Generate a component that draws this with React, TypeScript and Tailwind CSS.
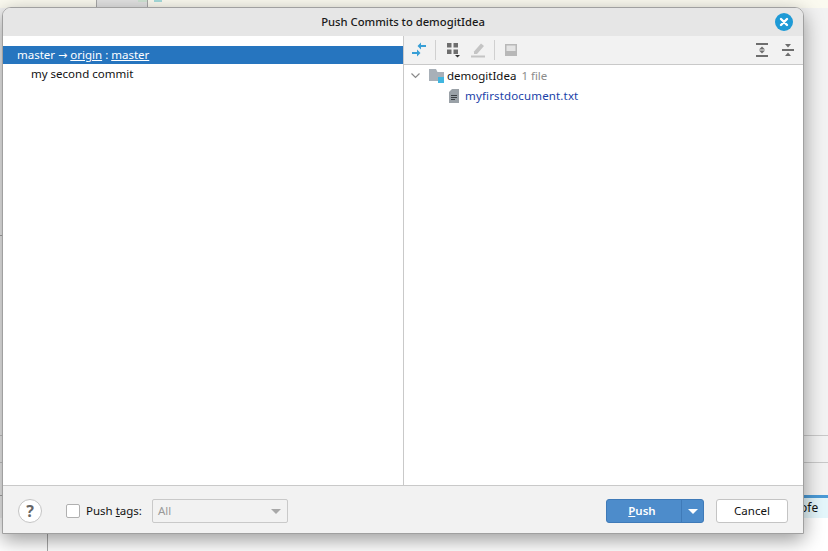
const FONT = "font-['Noto_Sans',sans-serif]";

function DiffIcon() {
  return (
    <svg width="16" height="16" viewBox="0 0 16 16" className="block">
      <path d="M15 3H10V0.5L6.5 4L10 7.5V5H15Z" fill="#389fd6" />
      <path d="M1 10H6V7.5L9.5 11L6 14.5V12H1Z" fill="#389fd6" />
    </svg>
  );
}

function GroupIcon() {
  return (
    <svg width="16" height="18" viewBox="0 0 16 18" className="block">
      <rect x="0" y="2" width="4.5" height="4.5" fill="#6e6e6e" />
      <rect x="6.5" y="2" width="4.5" height="4.5" fill="#6e6e6e" />
      <rect x="0" y="8.5" width="4.5" height="4.5" fill="#6e6e6e" />
      <rect x="6.5" y="8.5" width="4.5" height="4.5" fill="#6e6e6e" />
      <path d="M8 14H13L10.5 16.5Z" fill="#333" />
    </svg>
  );
}

function EditIcon() {
  return (
    <svg width="15" height="16" viewBox="0 0 15 16" className="block">
      <path d="M3 9.5L10 1.5L13 4L6 12H3Z" fill="#c4c4c4" />
      <rect x="0" y="13.5" width="14" height="2" fill="#c4c4c4" />
    </svg>
  );
}

function PreviewIcon() {
  return (
    <svg width="12" height="12" viewBox="0 0 12 12" className="block">
      <rect width="12" height="12" fill="#b8b8b8" />
      <rect x="1.5" y="1.5" width="9" height="5.5" fill="#e4e4e4" />
    </svg>
  );
}

function ExpandIcon() {
  return (
    <svg width="12" height="14" viewBox="0 0 12 14" className="block">
      <rect width="12" height="2" fill="#6e6e6e" />
      <rect y="12" width="12" height="2" fill="#6e6e6e" />
      <path d="M3 6.5L6 3.5L9 6.5Z" fill="#6e6e6e" />
      <path d="M3 7.5L9 7.5L6 10.5Z" fill="#6e6e6e" />
    </svg>
  );
}

function CollapseIcon() {
  return (
    <svg width="12" height="12" viewBox="0 0 12 12" className="block">
      <rect y="5" width="12" height="2" fill="#6e6e6e" />
      <path d="M3 0H9L6 3.5Z" fill="#6e6e6e" />
      <path d="M3 12H9L6 8.5Z" fill="#6e6e6e" />
    </svg>
  );
}

function FolderIcon() {
  return (
    <svg width="16" height="14" viewBox="0 0 16 14" className="block">
      <path d="M0 0H7L8.5 3H15V12H0Z" fill="#a8b0b8" />
      <rect x="9" y="8" width="6" height="6" fill="#40b6e0" />
    </svg>
  );
}

function FileIcon() {
  return (
    <svg width="10" height="14" viewBox="0 0 10 14" className="block">
      <path d="M3 0H10V14H0V3Z" fill="#9aa1a7" />
      <rect x="2" y="6" width="6" height="1" fill="#3c4044" />
      <rect x="2" y="8" width="6" height="1" fill="#3c4044" />
      <rect x="2" y="10" width="4" height="1" fill="#3c4044" />
    </svg>
  );
}

function CloseIcon() {
  return (
    <svg width="18" height="18" viewBox="0 0 18 18" className="block">
      <circle cx="9" cy="9" r="9" fill="#1e9ad6" />
      <path d="M6 6L12 12M12 6L6 12" stroke="#fff" strokeWidth="2.4" strokeLinecap="round" />
    </svg>
  );
}

// the IDE window behind the dialog, only slivers of it show
function Backdrop() {
  return (
    <div className="absolute inset-0 bg-[#f2f2f2]">
      <div className="absolute inset-x-0 top-0 h-[8px] bg-[#fbfaf0]" />
      <div className="absolute left-[96px] top-0 h-[8px] w-[52px] border-x border-[#a8a8a8] bg-[#e2e2e2]" />
      <div className="absolute left-[138px] top-0 h-[2px] w-[9px] bg-[#cfe3d3]" />
      <div className="absolute left-[154px] top-0 h-[2px] w-[8px] bg-[#a6dcdc]" />
      <div className="absolute inset-x-0 top-[518px] h-[33px] bg-white" />
      <div className="absolute left-[47px] top-[533px] h-[18px] w-px bg-[#a8a8a8]" />
      <div className="absolute left-0 top-[235px] h-px w-[3px] bg-[#a8a8a8]" />
      <div className="absolute inset-x-0 top-[435px] h-px bg-[#c8c8c8]" />
      <div className="absolute inset-x-0 top-[462px] h-px bg-[#c8c8c8]" />
      <div className="absolute left-0 top-[495px] h-px w-[3px] bg-[#a8a8a8]" />
      <div className="absolute left-[803px] right-0 top-[495px] h-[3px] bg-[#4a9ad6]" />
      <div className="absolute left-[803px] right-0 top-[498px] h-[20px] bg-[#e4f6fb]" />
      <div className="absolute left-[800px] top-[499px] text-[12px] leading-[18px] text-[#111]">ofe</div>
    </div>
  );
}

export default function App() {
  return (
    <div className={`relative h-[551px] w-[828px] overflow-hidden ${FONT} text-[11.5px] text-[#1a1a1a]`}>
      <Backdrop />
      <div className="absolute left-[2px] top-[7px] flex h-[527px] w-[802px] flex-col overflow-hidden rounded-t-[9px] border border-[#a0a0a0] bg-white shadow-[0_6px_20px_rgba(0,0,0,0.4)]">
        <div className="relative flex h-[28px] shrink-0 items-center justify-center bg-[#e6e6e6] text-[11.25px] font-medium">
          <span>Push Commits to demogitIdea</span>
          <div className="absolute right-[10px] top-[5px]">
            <CloseIcon />
          </div>
        </div>

        <div className="flex min-h-0 flex-1">
          <div className="w-[401px] shrink-0 border-r border-[#c9c9c9] pt-[10px]">
            <div className="flex h-[18px] items-center bg-[#2675bf] pl-[14px] pt-[1px] text-white">
              <span>master <span className="font-['DejaVu_Sans',sans-serif] text-[11px]">→</span> <span className="underline">origin</span> : <span className="underline">master</span></span>
            </div>
            <div className="flex h-[20px] items-center pl-[28px] text-[#111]">my second commit</div>
          </div>

          <div className="flex min-w-0 flex-1 flex-col">
            <div className="flex h-[29px] shrink-0 items-center border-b border-[#c9c9c9] bg-[#f2f2f2] pl-[7px] pr-[9px]">
              <DiffIcon />
              <div className="ml-[8px] h-[20px] w-px bg-[#d0d0d0]" />
              <div className="ml-[11px]"><GroupIcon /></div>
              <div className="ml-[8px]"><EditIcon /></div>
              <div className="ml-[8px] h-[20px] w-px bg-[#d0d0d0]" />
              <div className="ml-[10px]"><PreviewIcon /></div>
              <div className="ml-auto flex items-center gap-[14px]">
                <ExpandIcon />
                <CollapseIcon />
              </div>
            </div>
            <div className="flex h-[21px] items-center pl-[7px]">
              <svg width="9" height="6" viewBox="0 0 9 6" className="block">
                <path d="M0.5 0.5L4.5 4.5L8.5 0.5" fill="none" stroke="#8a8a8a" strokeWidth="1.2" />
              </svg>
              <div className="ml-[9px]"><FolderIcon /></div>
              <span className="ml-[2px] text-[#111]">demogitIdea</span>
              <span className="ml-[5px] text-[#8c8c8c]">1 file</span>
            </div>
            <div className="flex h-[20px] items-center pl-[45px]">
              <FileIcon />
              <span className="ml-[6px] tracking-[0.15px] text-[#1a3fa8]">myfirstdocument.txt</span>
            </div>
          </div>
        </div>

        <div className="flex h-[48px] shrink-0 items-center border-t border-[#c9c9c9] bg-[#f2f2f2] pl-[15px] pr-[15px] pt-[3px]">
          <div className="flex h-[24px] w-[24px] items-center justify-center rounded-full border border-[#c4c4c4] bg-white text-[16px] font-bold text-[#666]">?</div>
          <div className="ml-[24px] h-[14px] w-[14px] rounded-[2px] border border-[#b0b0b0] bg-white" />
          <span className="ml-[6px] w-[56px] text-[#111]">Push <span className="underline">t</span>ags:</span>
          <div className="ml-[10px] flex h-[24px] w-[136px] items-center justify-between rounded-[2px] border border-[#c9c9c9] pl-[5px] pr-[6px] text-[#9a9a9a]">
            <span>All</span>
            <span className="h-0 w-0 border-x-[5px] border-t-[5px] border-x-transparent border-t-[#a8a8a8]" />
          </div>
          <div className="ml-auto flex h-[24px] w-[98px] overflow-hidden rounded-[3px] border border-[#3f7ab8] bg-[#4d8ccb] font-semibold text-white">
            <div className="flex flex-1 items-center justify-center border-r border-[#3f7ab8] pr-[4px]">
              <span><span className="underline">P</span>ush</span>
            </div>
            <div className="flex w-[21px] items-center justify-center">
              <span className="h-0 w-0 border-x-[5px] border-t-[5px] border-x-transparent border-t-white" />
            </div>
          </div>
          <div className="ml-[12px] flex h-[24px] w-[72px] items-center justify-center rounded-[3px] border border-[#c4c4c4] bg-white text-[#111]">Cancel</div>
        </div>
      </div>
    </div>
  );
}
